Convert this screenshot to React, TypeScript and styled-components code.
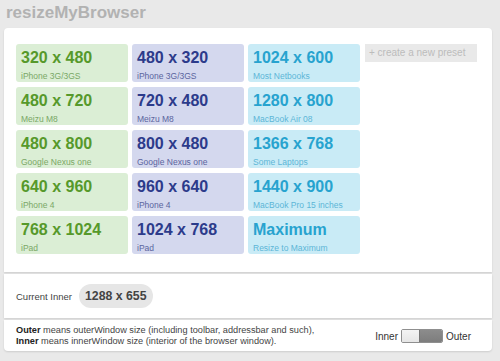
import styled, { createGlobalStyle } from 'styled-components';

type Tone = 'green' | 'blue' | 'cyan';

const tones: Record<Tone, { bg: string; fg: string; sub: string }> = {
  green: { bg: '#dbeed5', fg: '#56992b', sub: '#7aa866' },
  blue: { bg: '#d4d8ee', fg: '#2c3b8b', sub: '#5b659e' },
  cyan: { bg: '#c9ebf6', fg: '#27a3cf', sub: '#5cb6d6' },
};

const presets: { size: string; name: string; tone: Tone }[][] = [
  [
    { size: '320 x 480', name: 'iPhone 3G/3GS', tone: 'green' },
    { size: '480 x 320', name: 'iPhone 3G/3GS', tone: 'blue' },
    { size: '1024 x 600', name: 'Most Netbooks', tone: 'cyan' },
  ],
  [
    { size: '480 x 720', name: 'Meizu M8', tone: 'green' },
    { size: '720 x 480', name: 'Meizu M8', tone: 'blue' },
    { size: '1280 x 800', name: 'MacBook Air 08', tone: 'cyan' },
  ],
  [
    { size: '480 x 800', name: 'Google Nexus one', tone: 'green' },
    { size: '800 x 480', name: 'Google Nexus one', tone: 'blue' },
    { size: '1366 x 768', name: 'Some Laptops', tone: 'cyan' },
  ],
  [
    { size: '640 x 960', name: 'iPhone 4', tone: 'green' },
    { size: '960 x 640', name: 'iPhone 4', tone: 'blue' },
    { size: '1440 x 900', name: 'MacBook Pro 15 inches', tone: 'cyan' },
  ],
  [
    { size: '768 x 1024', name: 'iPad', tone: 'green' },
    { size: '1024 x 768', name: 'iPad', tone: 'blue' },
    { size: 'Maximum', name: 'Resize to Maximum', tone: 'cyan' },
  ],
];

export default function App() {
  return (
    <>
      <GlobalStyle />
      <Page>
        <Title>resizeMyBrowser</Title>
        <Panel>
          <PresetSection>
            <PresetGrid>
              {presets.map((row, r) =>
                row
                  .map((p) => (
                    <Card key={p.size + p.name} $tone={p.tone}>
                      <Size $tone={p.tone}>{p.size}</Size>
                      <Name $tone={p.tone}>{p.name}</Name>
                    </Card>
                  ))
                  .concat(r === 0 ? [<NewPreset key="new">+ create a new preset</NewPreset>] : [<span key={'e' + r} />])
              )}
            </PresetGrid>
          </PresetSection>
          <CurrentSection>
            <CurrentLabel>Current Inner</CurrentLabel>
            <Pill>1288 x 655</Pill>
          </CurrentSection>
          <Footer>
            <Legend>
              <b>Outer</b> means outerWindow size (including toolbar, addressbar and such),
              <br />
              <b>Inner</b> means innerWindow size (interior of the browser window).
            </Legend>
            <ModeSwitch>
              <SwitchLabel>Inner</SwitchLabel>
              <Track>
                <Half $on={false} />
                <Half $on />
              </Track>
              <SwitchLabel>Outer</SwitchLabel>
            </ModeSwitch>
          </Footer>
        </Panel>
      </Page>
    </>
  );
}

const GlobalStyle = createGlobalStyle`
  html, body {
    margin: 0;
    background: #e9e9e9;
    font-family: "Liberation Sans", Arial, sans-serif;
  }
`;

const Page = styled.div`
  padding: 3px 8px 11px 4px;
`;

const Title = styled.h1`
  margin: 0 0 5px 2px;
  font-size: 17px;
  line-height: 20px;
  font-weight: bold;
  color: #b2b2b2;
`;

const Panel = styled.div`
  display: flex;
  flex-direction: column;
  gap: 2px;
`;

const Section = styled.div`
  background: #fff;
  box-shadow: 0 1px 2px rgba(0, 0, 0, 0.12);
`;

const PresetSection = styled(Section)`
  padding: 16px 12px 18px;
  border-radius: 4px 4px 0 0;
`;

const PresetGrid = styled.div`
  display: grid;
  grid-template-columns: 112px 112px 112px 113px;
  grid-auto-rows: 38px;
  column-gap: 4px;
  row-gap: 5px;
  & > :nth-child(4n) {
    margin-left: 1px;
  }
`;

const Card = styled.div<{ $tone: Tone }>`
  background: ${(p) => tones[p.$tone].bg};
  border-radius: 3px;
  padding: 5px 5px 0;
  cursor: pointer;
`;

const Size = styled.div<{ $tone: Tone }>`
  font-size: 16px;
  line-height: 18px;
  font-weight: bold;
  color: ${(p) => tones[p.$tone].fg};
`;

const Name = styled.div<{ $tone: Tone }>`
  margin-top: 4px;
  font-size: 8.5px;
  line-height: 10px;
  color: ${(p) => tones[p.$tone].sub};
  white-space: nowrap;
`;

const NewPreset = styled.div`
  align-self: start;
  height: 18px;
  line-height: 18px;
  padding-left: 4px;
  background: #e9e9e9;
  font-size: 10px;
  color: #bcbcbc;
`;

const CurrentSection = styled(Section)`
  display: flex;
  align-items: center;
  gap: 7px;
  padding: 10px 12px;
`;

const CurrentLabel = styled.span`
  font-size: 9.5px;
  color: #444;
`;

const Pill = styled.span`
  height: 24px;
  line-height: 24px;
  padding: 0 6px;
  border-radius: 12px;
  background: #e6e6e6;
  font-size: 12.3px;
  font-weight: bold;
  color: #444;
`;

const Footer = styled(Section)`
  display: flex;
  align-items: center;
  justify-content: space-between;
  padding: 5px 21px 4px 12px;
  border-radius: 0 0 4px 4px;
`;

const Legend = styled.p`
  margin: 0;
  font-size: 9.2px;
  line-height: 11px;
  color: #444;
  b {
    color: #222;
  }
`;

const ModeSwitch = styled.div`
  display: flex;
  align-items: center;
  gap: 3px;
`;

const SwitchLabel = styled.span`
  font-size: 10px;
  color: #333;
`;

const Track = styled.div`
  display: flex;
  width: 42px;
  height: 14px;
  box-sizing: border-box;
  border: 1px solid #8f8f8f;
  border-radius: 2px;
  overflow: hidden;
`;

const Half = styled.span<{ $on: boolean }>`
  flex: ${(p) => (p.$on ? '0 0 22px' : '1')};
  background: ${(p) => (p.$on ? 'linear-gradient(#8c8c8c, #7d7d7d)' : 'linear-gradient(#f4f4f4, #e6e6e6)')};
  border-left: ${(p) => (p.$on ? '1px solid #777' : 'none')};
`;
